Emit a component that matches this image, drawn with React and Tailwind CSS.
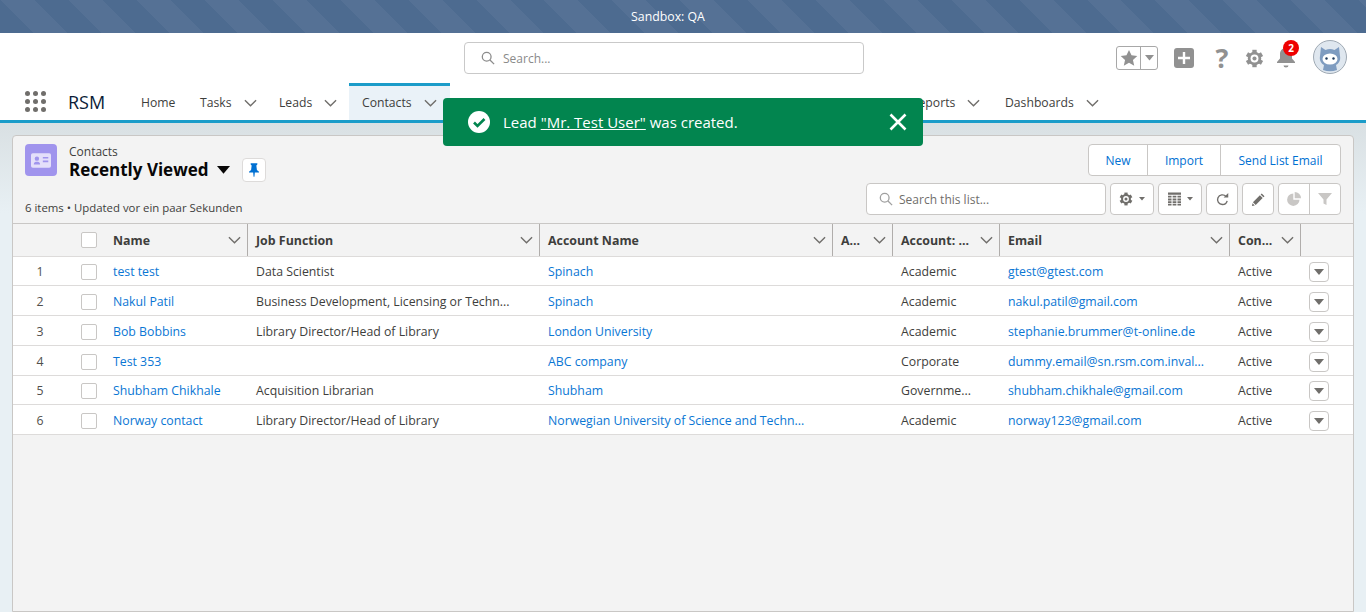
import React from "react";

const Chevron = ({ className = "" }) => (
  <svg viewBox="0 0 14 8" className={"w-[13px] h-[8px] shrink-0 " + className} fill="none" stroke="#706e6b" strokeWidth="1.5">
    <path d="M1 1l6 6 6-6" />
  </svg>
);

const Caret = ({ w = 8, color = "#706e6b" }) => (
  <svg viewBox="0 0 10 6" width={w} height={w * 0.6} className="shrink-0">
    <path d="M0 0h10L5 6z" fill={color} />
  </svg>
);

const Gear = ({ size = 18, color = "#919191" }) => (
  <svg viewBox="0 0 24 24" width={size} height={size} className="shrink-0">
    <g stroke={color} strokeWidth="5.500">
      <path d="M12 1v22" />
      <path d="M2.500 6.500l19 11" />
      <path d="M2.500 17.500l19-11" />
    </g>
    <circle cx="12" cy="12" r="8.500" fill={color} />
    <circle cx="12" cy="12" r="5" fill="#fff" />
    <circle cx="12" cy="12" r="2.600" fill={color} />
  </svg>
);

const Search = ({ size = 14, color = "#8c8c8c" }) => (
  <svg viewBox="0 0 16 16" width={size} height={size} fill="none" stroke={color} strokeWidth="1.5" className="shrink-0">
    <circle cx="6.500" cy="6.500" r="5" />
    <path d="M10.200 10.200l4.800 4.800" />
  </svg>
);

const Tab = ({ label, chevron = true, className = "" }) => (
  <div className={"flex items-center h-full pt-[3px] text-[12.200px] " + className}>
    <span>{label}</span>
    {chevron && <Chevron className="ml-[12px]" />}
  </div>
);

const columns = "grid grid-cols-[60px_32px_143px_292px_293px_60px_107px_230px_71px_1fr]";

const rows = [
  ["1", "test test", "Data Scientist", "Spinach", "Academic", "gtest@gtest.com", "h-[29px] pt-[2px]"],
  ["2", "Nakul Patil", "Business Development, Licensing or Techn...", "Spinach", "Academic", "nakul.patil@gmail.com", "h-[30px] pt-[3px]"],
  ["3", "Bob Bobbins", "Library Director/Head of Library", "London University", "Academic", "stephanie.brummer@t-online.de", "h-[30px] pt-[3px]"],
  ["4", "Test 353", "", "ABC company", "Corporate", "dummy.email@sn.rsm.com.inval...", "h-[30px] pt-[3px]"],
  ["5", "Shubham Chikhale", "Acquisition Librarian", "Shubham", "Governme...", "shubham.chikhale@gmail.com", "h-[29px] pt-[2px]"],
  ["6", "Norway contact", "Library Director/Head of Library", "Norwegian University of Science and Techn...", "Academic", "norway123@gmail.com", "h-[30px] pt-[3px]"],
];

const HeadCell = ({ label }) => (
  <div className="flex items-center justify-between pl-2 pr-[6px] border-r border-[#b0adab] min-w-0">
    <span className="font-bold text-[#3e3e3c] whitespace-nowrap pt-[2px]">{label}</span>
    <Chevron />
  </div>
);

const Box = () => <div className="w-4 h-4 bg-white border border-[#c9c7c5] rounded-[2px]" />;

const ToolBtn = ({ children, className = "" }) => (
  <div className={"h-8 bg-white border border-[#c9c7c5] rounded flex items-center justify-center " + className}>{children}</div>
);

export default function App() {
  return (
    <div className="h-[612px] w-[1366px] overflow-hidden flex flex-col relative text-[13px] text-[#3e3e3c] font-['Open_Sans',sans-serif] bg-[#e8f0f4]">
      {/* sandbox bar */}
      <div className="h-[33px] shrink-0 flex items-center justify-center pr-[30px] pt-[2px] text-white text-[12.300px] bg-[repeating-linear-gradient(45deg,#4d6b90_0px,#4d6b90_24px,#557195_24px,#557195_48px)]">
        Sandbox: QA
      </div>

      {/* global header */}
      <div className="h-[50px] shrink-0 bg-white relative flex justify-center pt-[9px] pr-[38px]">
        <div className="w-[400px] h-8 border border-[#c9c9c9] rounded flex items-center pl-4 text-[#8a8a8a] text-[12px] gap-2">
          <Search />
          <span className="pt-[1px]">Search...</span>
        </div>
        <div className="absolute left-[1116px] top-[13px] flex items-start">
          <div className="w-[42px] h-6 border border-[#a8a8a8] rounded-[3px] flex">
            <div className="w-6 border-r border-[#a8a8a8] flex items-center justify-center">
              <svg viewBox="0 0 20 20" width="18" height="18"><path fill="#919191" d="M10 1l2.800 6 6.400.7-4.800 4.400 1.400 6.400L10 15.200l-5.800 3.300 1.400-6.400L.8 7.700l6.400-.7z" /></svg>
            </div>
            <div className="flex-1 flex items-center justify-center"><Caret w={9} color="#919191" /></div>
          </div>
          <div className="w-5 h-5 ml-4 mt-[2px] rounded-[3px] bg-[#919191] relative flex items-center justify-center">
            <svg viewBox="0 0 14 14" width="14" height="14"><path d="M7 1v12M1 7h12" stroke="#fff" strokeWidth="2.400" /></svg>
          </div>
          <div className="w-[14px] ml-[21px] mt-[-2px] text-[#919191] font-bold text-[27px] leading-[28px] flex justify-center">?</div>
          <div className="ml-[16px] mt-[3px]"><Gear size={19} /></div>
          <div className="ml-[12px] mt-[1px] relative">
            <svg viewBox="0 0 20 22" width="20" height="22"><path fill="#919191" d="M10 1c3.800 0 6 2.800 6 6v4.500l3 3.500v1H1v-1l3-3.500V7c0-3.200 2.200-6 6-6zM7.500 18.500h5a2.500 2 0 01-5 0z" /></svg>
            <div className="absolute left-[7px] top-[-7px] w-4 h-4 rounded-full bg-[#e00] text-white text-[10px] font-bold flex items-center justify-center">2</div>
          </div>
          <div className="ml-[17px] mt-[-6px]">
            <svg viewBox="0 0 34 34" width="34" height="34">
              <circle cx="17" cy="17" r="16.500" fill="#dfe7ef" stroke="#9fa9b3" />
              <path d="M8 7l4.500 3a11 11 0 019 0L26 7l1 9c1 5-2 8-4 9l1 5a20 20 0 01-14 0l1-5c-2-1-5-4-4-9z" fill="#7f9cc0" />
              <ellipse cx="17" cy="19" rx="7.500" ry="5.500" fill="#fff" />
              <circle cx="13.500" cy="18.500" r="1.200" fill="#1f3a5c" />
              <circle cx="20.500" cy="18.500" r="1.200" fill="#1f3a5c" />
            </svg>
          </div>
        </div>
      </div>

      {/* nav */}
      <div className="h-10 shrink-0 bg-white border-b-[3px] border-[#1b9cc9] flex items-stretch">
        <div className="w-[21px] ml-[25px] mt-[8px] h-[21px] grid grid-cols-3 gap-[3px]">
          {[0, 1, 2, 3, 4, 5, 6, 7, 8].map((i) => (
            <div key={i} className="w-[5px] h-[5px] rounded-full bg-[#706e6b]" />
          ))}
        </div>
        <div className="w-[95px] pl-[22px] pt-[1px] flex items-center text-[18px] text-[#0b1c38] leading-none">RSM</div>
        <Tab label="Home" chevron={false} className="w-[58px]" />
        <Tab label="Tasks" className="w-[80px] pl-[1px]" />
        <Tab label="Leads" className="w-[70px]" />
        <div className="w-[101px] bg-[#eaf2f8] border-t-[3px] border-[#1b9cc9] pl-[13px] flex items-center text-[12.200px]">
          <span>Contacts</span>
          <Chevron className="ml-[12px]" />
        </div>
        <div className="w-[461px]" />
        <Tab label="Reports" className="w-[94px]" />
        <Tab label="Dashboards" />
      </div>

      {/* toast */}
      <div className="absolute left-[443px] top-[98px] w-[480px] h-12 rounded bg-[#02854f] text-white flex items-center pl-[25px] pr-[16px] text-[15px]">
        <svg viewBox="0 0 22 22" width="22" height="22" className="shrink-0 mr-[13px]">
          <circle cx="11" cy="11" r="11" fill="#fff" />
          <path d="M6 11.500l3.500 3.500L16.500 8" fill="none" stroke="#02854f" strokeWidth="2.600" />
        </svg>
        <span className="flex-1 whitespace-nowrap">
          Lead <span className="underline">"Mr. Test User"</span> was created.
        </span>
        <svg viewBox="0 0 18 18" width="18" height="18" className="shrink-0"><path d="M1.500 1.500l15 15M16.500 1.500l-15 15" stroke="#fff" strokeWidth="2.600" /></svg>
      </div>

      {/* body */}
      <div className="flex-1 min-h-0 px-3 pt-3 bg-[linear-gradient(#d9e0e3,#e8f0f4_90px)]">
        <div className="h-full bg-[#f3f3f3] border border-[#c9c7c5] rounded-t-[4px] flex flex-col">
          {/* list header */}
          <div className="h-[87px] shrink-0 relative">
            <div className="absolute left-3 top-2 flex">
              <div className="w-8 h-8 rounded bg-[#a094ed] flex items-center justify-center">
                <svg viewBox="0 0 22 16" width="20" height="15">
                  <rect x="0" y="0" width="22" height="16" rx="2" fill="#e4dffa" />
                  <circle cx="6.500" cy="6" r="2.400" fill="#a094ed" />
                  <path d="M3 12.500c0-2.500 2-3 3.500-3s3.500.5 3.500 3z" fill="#a094ed" />
                  <path d="M13 5h6M13 9h6" stroke="#a094ed" strokeWidth="1.800" />
                </svg>
              </div>
              <div className="ml-3">
                <div className="text-[12px] leading-[16px] text-[#3e3e3c]">Contacts</div>
                <div className="flex items-center h-[20px]">
                  <span className="text-[17px] font-bold leading-[20px] text-[#080707]">Recently Viewed</span>
                  <span className="ml-2"><Caret w={13} color="#080707" /></span>
                  <div className="ml-[12px] w-6 h-6 bg-white border border-[#dddbda] rounded flex items-center justify-center mt-[-1px]">
                    <svg viewBox="0 0 12 16" width="10" height="14"><path fill="#0070d2" d="M2 0h8v1.500L8.800 2.500 9.500 8 12 10v1H7l-.5 5h-1L5 11H0v-1l2.500-2 .7-5.500L2 1.500z" /></svg>
                  </div>
                </div>
              </div>
            </div>
            <div className="absolute left-3 top-[65px] text-[11.400px] leading-[14px] text-[#3e3e3c]">6 items • Updated vor ein paar Sekunden</div>
            <div className="absolute right-3 top-2 h-8 bg-white border border-[#c9c7c5] rounded flex text-[#0070d2] text-[12px]">
              <div className="w-[59px] pt-[1px] flex items-center justify-center border-r border-[#c9c7c5]">New</div>
              <div className="w-[73px] pt-[1px] flex items-center justify-center border-r border-[#c9c7c5]">Import</div>
              <div className="w-[119px] pt-[1px] flex items-center justify-center">Send List Email</div>
            </div>
            <div className="absolute right-3 top-[47px] flex gap-1 items-start">
              <div className="w-[240px] h-8 bg-white border border-[#c9c7c5] rounded flex items-center pl-3 gap-[6px] text-[12px] text-[#706e6b]">
                <Search size={14} color="#a0a0a0" />
                <span className="pt-[1px]">Search this list...</span>
              </div>
              <ToolBtn className="w-11 gap-[6px]"><Gear size={14} color="#706e6b" /><Caret w={6} /></ToolBtn>
              <ToolBtn className="w-11 gap-[6px]">
                <svg viewBox="0 0 14 14" width="13" height="14">
                  <path fill="#706e6b" d="M0 0h14v2.500H0zM0 3.500h3.800v2H0zM5 3.500h4v2H5zM10.200 3.500H14v2h-3.800zM0 6.500h3.800v2H0zM5 6.500h4v2H5zM10.200 6.500H14v2h-3.800zM0 9.500h3.800v2H0zM5 9.500h4v2H5zM10.200 9.500H14v2h-3.800zM0 12.300h3.800V14H0zM5 12.300h4V14H5zM10.200 12.300H14V14h-3.800z" />
                </svg>
                <Caret w={6} />
              </ToolBtn>
              <ToolBtn className="w-8">
                <svg viewBox="0 0 14 14" width="13" height="13">
                  <path d="M10.800 3.800A5.200 5.200 0 107 12.400a5.200 5.200 0 005-4" fill="none" stroke="#706e6b" strokeWidth="1.500" />
                  <path d="M8.200 4.800L13.200 0v4.800z" fill="#706e6b" />
                </svg>
              </ToolBtn>
              <ToolBtn className="w-8">
                <svg viewBox="0 0 14 14" width="13" height="13"><path fill="#706e6b" d="M10.500.5l3 3-1.200 1.200-3-3zM8.500 2.500l3 3L4 13 1 10zM.5 11l2.500 2.500L0 14z" /></svg>
              </ToolBtn>
              <div className="w-[63px] h-8 bg-white border border-[#c9c7c5] rounded flex">
                <div className="w-[31px] border-r border-[#c9c7c5] flex items-center justify-center">
                  <svg viewBox="0 0 14 14" width="14" height="14"><path fill="#c9c7c5" d="M6.300 1.500v6.200h6.200A6.200 6.200 0 116.300 1.500zM7.700 0A6.300 6.300 0 0114 6.300H7.700z" /></svg>
                </div>
                <div className="flex-1 flex items-center justify-center">
                  <svg viewBox="0 0 14 14" width="14" height="14"><path fill="#c9c7c5" d="M0 1h14L8.500 7.500V13l-3-1.500v-4z" /></svg>
                </div>
              </div>
            </div>
          </div>

          {/* table header */}
          <div className={columns + " h-[34px] shrink-0 border-t border-b border-[#dddbda] border-t-[#c9c7c5] text-[12.400px]"}>
            <div />
            <div className="flex items-center pl-2"><Box /></div>
            <HeadCell label="Name" />
            <HeadCell label="Job Function" />
            <HeadCell label="Account Name" />
            <HeadCell label="A..." />
            <HeadCell label="Account: ..." />
            <HeadCell label="Email" />
            <HeadCell label="Con..." />
            <div />
          </div>

          {/* rows */}
          {rows.map((r) => (
            <div key={r[0]} className={columns + " " + r[6] + " shrink-0 bg-white border-b border-[#dddbda] text-[12.300px] items-center whitespace-nowrap"}>
              <div className="text-center pr-[6px] text-[#514f4d]">{r[0]}</div>
              <div className="pl-2"><Box /></div>
              <div className="pl-2 text-[#0a76d4]">{r[1]}</div>
              <div className="pl-2">{r[2]}</div>
              <div className="pl-2 text-[#0a76d4]">{r[3]}</div>
              <div />
              <div className="pl-2">{r[4]}</div>
              <div className="pl-2 text-[#0a76d4]">{r[5]}</div>
              <div className="pl-2">Active</div>
              <div className="pl-2">
                <div className="w-5 h-5 bg-white border border-[#c9c7c5] rounded flex items-center justify-center"><Caret w={10} color="#706e6b" /></div>
              </div>
            </div>
          ))}
        </div>
      </div>
    </div>
  );
}
